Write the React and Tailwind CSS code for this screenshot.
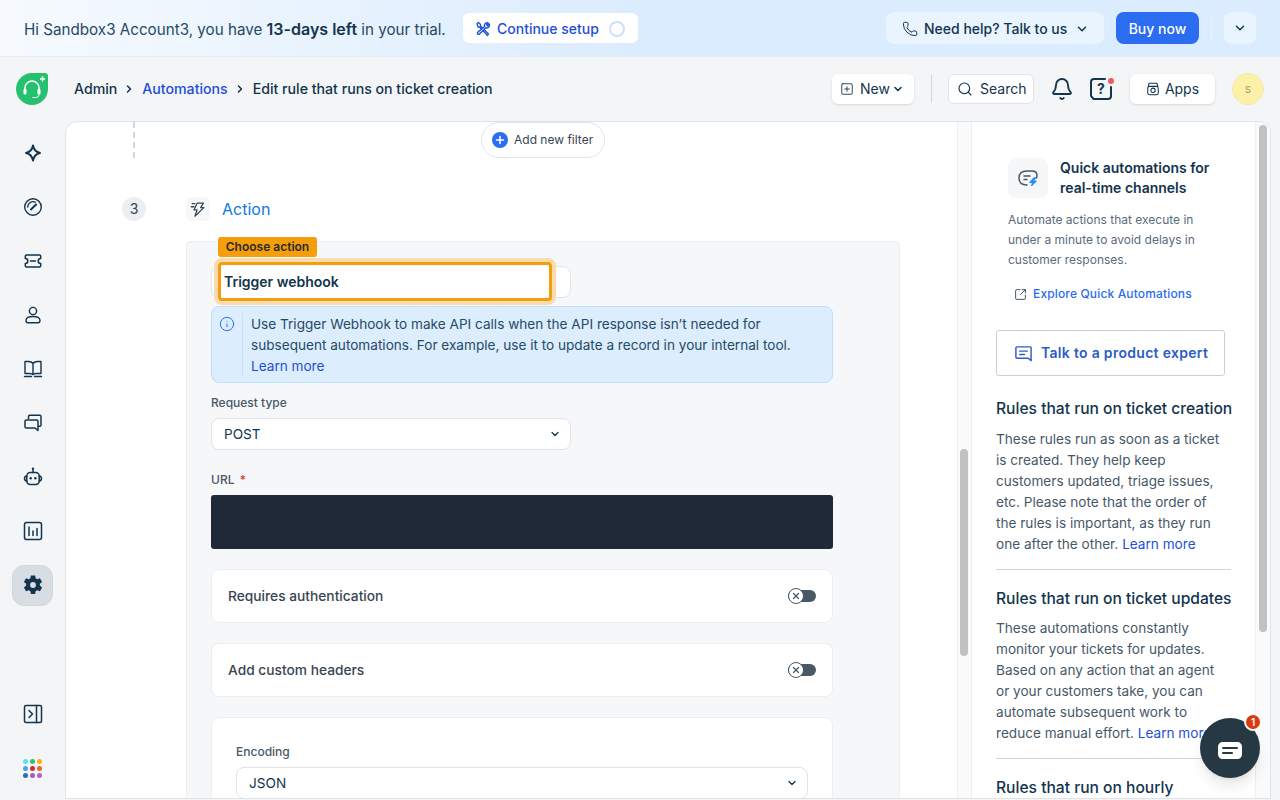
import {
  Bell,
  ChevronDown,
  ChevronRight,
  Info,
  Phone,
  Plus,
  Search,
  SquareArrowOutUpRight,
  SquarePlus,
  X,
} from "lucide-react";

const iconClass = "h-5 w-5 text-[#12344d]";

function Spark() {
  return (
    <svg viewBox="0 0 20 20" className={iconClass} fill="none" stroke="currentColor" strokeWidth="2" strokeLinejoin="round">
      <path d="M10 2.500c.8 4.300 2.900 6.600 7 7.500-4.100.9-6.200 3.200-7 7.500-.8-4.300-2.900-6.600-7-7.500 4.100-.9 6.200-3.200 7-7.500z" />
    </svg>
  );
}

function Gauge() {
  return (
    <svg viewBox="0 0 20 20" className={iconClass} fill="none" stroke="currentColor" strokeWidth="1.400" strokeLinecap="round">
      <circle cx="10" cy="10" r="8.300" />
      <path d="M4.700 10a5.300 5.300 0 0 1 7.600-4.800" />
      <path d="M8 12.500l5-5" strokeWidth="2" />
    </svg>
  );
}

function Ticket() {
  return (
    <svg viewBox="0 0 20 20" className={iconClass} fill="none" stroke="currentColor" strokeWidth="1.500" strokeLinejoin="round">
      <path d="M3.500 4h13c.8 0 1.200.5 1.200 1.200v2.300a2.500 2.500 0 0 0 0 5v2.300c0 .7-.4 1.200-1.200 1.200h-13c-.8 0-1.200-.5-1.200-1.200v-2.300a2.500 2.500 0 0 0 0-5V5.200C2.300 4.500 2.700 4 3.500 4z" />
      <path d="M7.500 10h5" strokeLinecap="round" />
    </svg>
  );
}

function Person() {
  return (
    <svg viewBox="0 0 20 20" className={iconClass} fill="none" stroke="currentColor" strokeWidth="1.400">
      <circle cx="10" cy="6" r="3.600" />
      <path d="M3 15.500c0-2.500 3-4 7-4s7 1.500 7 4c0 1.500-.8 2.200-2 2.200H5c-1.200 0-2-.7-2-2.200z" />
    </svg>
  );
}

function Book() {
  return (
    <svg viewBox="0 0 20 20" className={iconClass} fill="none" stroke="currentColor" strokeWidth="1.400" strokeLinejoin="round">
      <path d="M10 4.500C9 3 7.500 2.500 5.500 2.500H2v12h4.500c1.800 0 3 .4 3.500 1.200.5-.8 1.700-1.200 3.500-1.200H18v-12h-3.500C12.500 2.500 11 3 10 4.500zM10 4.500v11" />
      <path d="M1.500 17.500h7M11.500 17.500h7" strokeLinecap="round" />
    </svg>
  );
}

function Chats() {
  return (
    <svg viewBox="0 0 20 20" className={iconClass} fill="none" stroke="currentColor" strokeWidth="1.500" strokeLinejoin="round">
      <path d="M5.500 6V3.500c0-.8.5-1.300 1.300-1.300h10c.8 0 1.200.5 1.200 1.300v8.500c0 .8-.4 1.300-1.200 1.300H15" />
      <path d="M3.300 7h10.400c.8 0 1.300.5 1.300 1.300v9.200l-3-2.500H3.300c-.8 0-1.300-.5-1.300-1.300V8.300C2 7.500 2.500 7 3.300 7z" />
    </svg>
  );
}

function Robot() {
  return (
    <svg viewBox="0 0 20 20" className={iconClass} fill="none" stroke="currentColor" strokeWidth="1.500" strokeLinecap="round">
      <circle cx="10" cy="1.800" r="1.200" fill="currentColor" stroke="none" />
      <path d="M10 3v2.500" />
      <rect x="3.800" y="5.500" width="12.400" height="12" rx="3.500" />
      <path d="M3.800 9c-1.500.2-2.300 1-2.300 2.500S2.300 13.800 3.800 14M16.200 9c1.500.2 2.300 1 2.300 2.500s-.8 2.300-2.300 2.500" />
      <circle cx="7.700" cy="11.300" r="1.200" fill="currentColor" stroke="none" />
      <circle cx="12.300" cy="11.300" r="1.200" fill="currentColor" stroke="none" />
    </svg>
  );
}

function Chart() {
  return (
    <svg viewBox="0 0 20 20" className={iconClass} fill="none" stroke="currentColor" strokeWidth="1.500" strokeLinecap="round">
      <rect x="1.500" y="1.500" width="17" height="17" rx="2" />
      <path d="M6 6v8.500M10 10v4.500M14 7.500v7" />
    </svg>
  );
}

function Gear() {
  return (
    <svg viewBox="0 0 24 24" className="h-[22px] w-[22px] text-[#12344d]" fill="currentColor">
      <path
        fillRule="evenodd"
        d="M9.700 1.500h4.600l.6 3.100 1.700 1 3-1 2.300 4-2.400 2.100v1.900l2.400 2.100-2.300 4-3-1-1.700 1-.6 3.100H9.700l-.6-3.100-1.700-1-3 1-2.300-4 2.400-2.100v-1.900L2.100 8.600l2.300-4 3 1 1.700-1zM12 8.800a3.200 3.200 0 1 0 0 6.400 3.200 3.200 0 0 0 0-6.400z"
      />
    </svg>
  );
}

function PanelToggle() {
  return (
    <svg viewBox="0 0 20 20" className={iconClass} fill="none" stroke="currentColor" strokeWidth="1.500" strokeLinecap="round" strokeLinejoin="round">
      <rect x="1.500" y="1.500" width="17" height="17" rx="1.500" />
      <path d="M13.500 1.500v17M6 6.500l3.500 3.500L6 13.500" />
    </svg>
  );
}

function AppDots() {
  const colors = ["#5ce1f2", "#2bc06f", "#ffb000", "#42a5f0", "#d7263d", "#f4621f", "#2a6fb5", "#9b5fd0", "#b85fd0"];
  return (
    <div className="grid grid-cols-3 gap-[2px]">
      {colors.map((c) => (
        <span key={c} className="h-[5px] w-[5px] rounded-full" style={{ backgroundColor: c }} />
      ))}
    </div>
  );
}

function Logo() {
  return (
    <svg viewBox="0 0 32 32" className="h-8 w-8">
      <path d="M16 0h13c1.700 0 3 1.300 3 3v13c0 8.800-7.200 16-16 16S0 24.800 0 16 7.200 0 16 0z" fill="#25c16f" />
      <path d="M9 19v-4a7 7 0 0 1 14 0v4" fill="none" stroke="#fff" strokeWidth="1.600" />
      <rect x="7.500" y="16" width="3" height="5.500" rx="1.300" fill="#fff" />
      <rect x="21.500" y="16" width="3" height="5.500" rx="1.300" fill="#fff" />
      <path d="M23 21.500c0 2.200-1.500 3-4 3h-2.500" fill="none" stroke="#fff" strokeWidth="1" />
      <path d="M26.500 3.500v5M24 6h5" stroke="#fff" strokeWidth="1.500" />
    </svg>
  );
}

function Tools() {
  return (
    <svg viewBox="0 0 16 16" className="h-4 w-4" fill="none" stroke="#1d4ed8" strokeWidth="1.300" strokeLinejoin="round" strokeLinecap="round">
      <path d="M2 2.500L3.500 1.500l2 2v1.500L13.500 13 12.500 14.500 4.500 6H3z" />
      <path d="M9.500 5.500a2.800 2.800 0 0 1 3.800-3.500l-1.800 1.800 1 1 1.800-1.800a2.800 2.800 0 0 1-3.500 3.800L4.500 13a1.200 1.200 0 0 1-1.800-1.700z" fill="#dbe7ff" />
    </svg>
  );
}

function HelpBubble() {
  return (
    <div className="relative ml-[15px] h-6 w-6">
      <svg viewBox="0 0 24 24" className="h-6 w-6" fill="none" stroke="#12344d" strokeWidth="2" strokeLinecap="round">
        <path d="M16 2H5C3 2 2 3 2 5v14l2.500 3H19c2 0 3-1 3-3v-9" />
      </svg>
      <span className="absolute inset-0 flex items-center justify-center text-sm font-bold text-[#12344d]">?</span>
      <span className="absolute right-[-1px] top-[1px] h-[6px] w-[6px] rounded-full bg-[#f25c5c]" />
    </div>
  );
}

function ActionBolt() {
  return (
    <svg viewBox="0 0 20 20" className="h-[18px] w-[18px]" fill="none" stroke="#384551" strokeWidth="1.400" strokeLinejoin="round" strokeLinecap="round">
      <path d="M9 3.500h7l-3 5h3.500L6.500 18l2.500-7H5.500z" />
      <path d="M3.500 4h3M2.500 7.500h3" />
    </svg>
  );
}

function NavItem({ active, children }) {
  return (
    <div className="flex h-[54px] items-center justify-center">
      <div className={`flex h-[41px] w-[41px] items-center justify-center rounded-xl ${active ? "border border-[#cfd7df] bg-[#d7dde3]" : ""}`}>
        {children}
      </div>
    </div>
  );
}

function ToggleCard({ label }) {
  return (
    <div className="mb-5 flex h-[54px] w-[622px] items-center justify-between rounded-lg border border-[#ebeff3] bg-white pl-4 pr-4">
      <span className="text-[13.75px] font-medium text-[#384551]">{label}</span>
      <div className="relative h-3 w-7 rounded-full bg-[#475867]">
        <div className="absolute left-0 top-[-2px] flex h-4 w-4 items-center justify-center rounded-full border border-[#475867] bg-white">
          <X className="h-2.5 w-2.5 text-[#475867]" strokeWidth={3} />
        </div>
      </div>
    </div>
  );
}

function Select({ children, className }) {
  return (
    <div className={`flex h-8 items-center justify-between rounded-lg border border-[#dfe3ea] bg-white pl-3 pr-[9px] text-[13.6px] text-[#12344d] ${className}`}>
      {children}
      <ChevronDown className="h-3 w-3 text-[#12344d]" strokeWidth={2.500} />
    </div>
  );
}

export default function App() {
  return (
    <div className="relative flex h-[800px] w-[1280px] flex-col overflow-hidden bg-[#f3f5f7] font-['Inter',sans-serif] text-[#12344d]">
      {/* trial banner */}
      <div className="flex h-[57px] shrink-0 items-center justify-between border-b border-[#e3eefa] bg-gradient-to-r from-[#f6fafe] to-[#dbecfe] to-[50%] pl-6 pr-6">
        <div className="flex items-center">
          <span className="w-[422px] whitespace-nowrap pt-[2px] text-[15.2px] text-[#264966]">
            Hi Sandbox3 Account3, you have <b className="text-base font-semibold text-[#12344d]">13-days left</b> in your trial.
          </span>
          <div className="ml-[17px] flex h-[30px] w-[175px] items-center rounded-md bg-white pl-3 pt-[2px]">
            <Tools />
            <span className="ml-[6px] text-sm font-medium text-[#1d4ed8]">Continue setup</span>
            <span className="ml-[10px] h-4 w-4 rounded-full border-2 border-[#cfe0f5]" />
          </div>
        </div>
        <div className="flex items-center">
          <div className="flex h-8 w-[218px] items-center rounded-lg bg-[#e9f4ff] pl-4 pt-[2px] text-sm font-medium text-[#12344d]">
            <Phone className="h-4 w-4" strokeWidth={1.500} />
            <span className="ml-[6px]">Need help? Talk to us</span>
            <ChevronDown className="ml-2 h-3.5 w-3.5" strokeWidth={2.500} />
          </div>
          <div className="ml-3 flex h-8 w-[83px] items-center justify-center rounded-lg bg-[#2b6cf0] pt-[2px] text-sm font-medium text-white">Buy now</div>
          <div className="ml-3 h-7 w-px bg-[#eaf3fd]" />
          <div className="ml-3 flex h-8 w-8 items-center justify-center rounded-lg bg-[#e9f4ff]">
            <ChevronDown className="h-3.5 w-3.5" strokeWidth={2.500} />
          </div>
        </div>
      </div>

      {/* top nav */}
      <div className="flex h-[64px] shrink-0 items-center justify-between pl-4 pr-4">
        <div className="flex items-center">
          <Logo />
          <div className="ml-[26px] flex items-center text-[14.15px] font-medium">
            <span>Admin</span>
            <ChevronRight className="ml-[6px] mr-[7px] h-3 w-3" strokeWidth={3} />
            <span className="text-[#1d4ed8]">Automations</span>
            <ChevronRight className="ml-[6px] mr-[7px] h-3 w-3" strokeWidth={3} />
            <span>Edit rule that runs on ticket creation</span>
          </div>
        </div>
        <div className="flex items-center">
          <div className="flex h-[30px] w-[82px] items-center rounded-md bg-white pl-[8px] text-sm shadow-sm">
            <SquarePlus className="h-[14px] w-[14px]" strokeWidth={1.500} />
            <span className="ml-[6px]">New</span>
            <ChevronDown className="ml-[2px] h-3 w-3" strokeWidth={3} />
          </div>
          <div className="ml-[17px] h-7 w-px bg-[#cfd7df]" />
          <div className="ml-4 flex h-[30px] w-[86px] items-center rounded-md border border-[#dfe3ea] bg-white pl-2 text-sm">
            <Search className="h-4 w-4" strokeWidth={1.700} />
            <span className="ml-[7px]">Search</span>
          </div>
          <Bell className="ml-4 h-6 w-6" strokeWidth={1.800} />
          <HelpBubble />
          <div className="ml-[17px] flex h-[30px] w-[85px] items-center justify-center rounded-md bg-white text-sm shadow-sm">
            <svg viewBox="0 0 16 16" className="h-[14px] w-[14px]" fill="none" stroke="currentColor" strokeWidth="1.200">
              <rect x="2" y="5" width="12" height="9.500" rx="2" />
              <path d="M2.500 5l1-3.500h9l1 3.500" />
              <circle cx="8" cy="9.500" r="2.500" />
            </svg>
            <span className="ml-[5px]">Apps</span>
          </div>
          <div className="ml-[17px] flex h-8 w-8 items-center justify-center rounded-full border border-[#f6e9a8] bg-[#fdf0a8] text-xs text-[#a89f6a]">s</div>
        </div>
      </div>

      <div className="flex min-h-0 flex-1 pb-[1px] pr-[9px]">
        {/* sidebar */}
        <div className="flex w-[65px] shrink-0 flex-col pb-[4px] pt-[5px]">
          <NavItem><Spark /></NavItem>
          <NavItem><Gauge /></NavItem>
          <NavItem><Ticket /></NavItem>
          <NavItem><Person /></NavItem>
          <NavItem><Book /></NavItem>
          <NavItem><Chats /></NavItem>
          <NavItem><Robot /></NavItem>
          <NavItem><Chart /></NavItem>
          <NavItem active><Gear /></NavItem>
          <div className="mt-auto">
            <NavItem><PanelToggle /></NavItem>
            <NavItem><AppDots /></NavItem>
          </div>
        </div>

        {/* content */}
        <div className="flex min-w-0 flex-1 overflow-hidden rounded-t-xl border border-[#dfe4e9] bg-white">
          <div className="relative w-[891px] shrink-0 overflow-hidden">
            <div className="flex h-[36px]">
              <div className="ml-[67px] h-[36px] border-l-2 border-dashed border-[#cfd7df]" />
              <div className="ml-[346px] flex h-[36px] w-[124px] items-center rounded-full border border-[#dfe3ea] bg-white pl-[10px]">
                <span className="flex h-4 w-4 items-center justify-center rounded-full bg-[#2b6cf0]">
                  <Plus className="h-3 w-3 text-white" strokeWidth={3} />
                </span>
                <span className="ml-[6px] text-xs text-[#384551]">Add new filter</span>
              </div>
            </div>

            <div className="mt-[39px] flex items-center">
              <span className="ml-14 flex h-6 w-6 items-center justify-center rounded-full bg-[#ebeff3] text-sm text-[#384551]">3</span>
              <span className="ml-10 flex h-6 w-6 items-center justify-center rounded-md bg-[#f5f7f9]">
                <ActionBolt />
              </span>
              <span className="ml-3 text-base text-[#0a7ae0]">Action</span>
            </div>

            <div className="relative ml-[120px] mt-[20px] h-[600px] w-[714px] rounded-sm border border-[#ebeff3] bg-[#f5f7f9] pl-6 pt-6">
              <div className="absolute left-[31px] top-[-5px] z-10 flex h-5 w-[99px] items-center justify-center rounded-[3px] bg-[#f59e0b] text-xs font-semibold text-[#2a2a2a]">
                Choose action
              </div>
              <div className="absolute left-[31px] top-[20px] z-10 flex h-[39px] w-[334px] items-center rounded-[4px] border-[3px] border-[#f59e0b] bg-white pl-[3px] text-sm font-semibold text-[#12344d] ring-4 ring-[#f8dcb0]">
                Trigger webhook
              </div>
              <Select className="w-[360px]"> </Select>

              <div className="mt-2 flex h-[77px] w-[622px] rounded-lg border border-[#bfdfff] bg-[#dcedfe] pb-[6px] pt-[6px] text-[13.6px] leading-[21px] text-[#264966]">
                <div className="flex w-[30px] justify-center pt-[3px]">
                  <Info className="h-4 w-4 text-[#2b6cf0]" strokeWidth={1.500} />
                </div>
                <div className="h-[63px] border-l border-[#c9e1f8] pl-[8px] pt-px">
                  <p className="whitespace-nowrap">Use Trigger Webhook to make API calls when the API response isn’t needed for</p>
                  <p className="whitespace-nowrap">subsequent automations. For example, use it to update a record in your internal tool.</p>
                  <p className="text-[#1d4ed8]">Learn more</p>
                </div>
              </div>

              <div className="mt-3 text-xs font-medium leading-4 text-[#475867]">Request type</div>
              <Select className="mt-[7px] w-[360px]">POST</Select>

              <div className="mt-[22px] text-xs font-medium leading-4 text-[#475867]">
                URL <span className="ml-[2px] text-[#e43538]">*</span>
              </div>
              <div className="mb-5 mt-[7px] h-[54px] w-[622px] rounded-[3px] bg-[#1f2937]" />

              <ToggleCard label="Requires authentication" />
              <ToggleCard label="Add custom headers" />

              <div className="w-[622px] rounded-lg border border-[#ebeff3] bg-white pb-10 pl-6 pt-[26px]">
                <div className="text-xs font-medium leading-4 text-[#475867]">Encoding</div>
                <Select className="mt-[7px] w-[572px]">JSON</Select>
              </div>
            </div>
          </div>

          {/* main scrollbar */}
          <div className="flex w-[14px] shrink-0 flex-col border-l border-[#ebeff3] bg-[#fafafa] pl-[2px] pr-[2px] pt-[327px]">
            <div className="h-[207px] w-[8px] rounded-full bg-[#c1c1c1]" />
          </div>

          {/* help panel */}
          <div className="relative flex w-[285px] shrink-0 flex-col overflow-hidden border-l border-r border-[#ebeff3] pl-6 pr-6 pt-9">
            <div className="ml-3 flex shrink-0">
              <span className="flex h-10 w-10 shrink-0 items-center justify-center rounded-lg bg-[#f5f7f9]">
                <svg viewBox="0 0 24 24" className="h-6 w-6" fill="none" stroke="#475867" strokeWidth="1.500" strokeLinecap="round">
                  <path d="M11 19c-4 0-8-1.500-8-7 0-5 3-7 8-7h5c3 0 5 1.500 5 4.500 0 1-.2 1.700-.5 2.500" />
                  <path d="M8 10h6M8 13.500h3" />
                  <path d="M17.500 12l-4 4.500h3l-1 3.500 5-5h-3l2-3z" fill="#2b8cf0" stroke="#2b8cf0" strokeWidth="1" />
                </svg>
              </span>
              <p className="ml-3 whitespace-nowrap text-sm font-semibold leading-5">
                Quick automations for
                <br />
                real-time channels
              </p>
            </div>
            <p className="ml-3 mt-3 shrink-0 whitespace-nowrap text-xs leading-5 text-[#5b6b7c]">
              Automate actions that execute in
              <br />
              under a minute to avoid delays in
              <br />
              customer responses.
            </p>
            <div className="ml-[18px] mt-[14px] flex shrink-0 items-center">
              <SquareArrowOutUpRight className="h-[13px] w-[13px] text-[#384551]" strokeWidth={1.700} />
              <span className="ml-[6px] text-xs font-medium leading-5 tracking-[0.15px] text-[#2b6cf0]">Explore Quick Automations</span>
            </div>
            <div className="mt-[26px] flex h-[46px] w-[229px] shrink-0 items-center rounded-[3px] border border-[#c5d0de] pl-[17px]">
              <svg viewBox="0 0 20 20" className="h-[19px] w-[19px]" fill="none" stroke="#2c5cc5" strokeWidth="1.500" strokeLinejoin="round" strokeLinecap="round">
                <path d="M3 3h14c.6 0 1 .4 1 1v13.500l-3-2.500H3c-.6 0-1-.4-1-1V4c0-.6.4-1 1-1z" />
                <path d="M6 7.500h8M6 11h5" />
              </svg>
              <span className="ml-2 text-sm font-semibold tracking-[0.3px] text-[#2c5cc5]">Talk to a product expert</span>
            </div>

            <h3 className="mt-[22px] shrink-0 whitespace-nowrap text-[15.6px] font-medium leading-[22px]">Rules that run on ticket creation</h3>
            <p className="mt-[9px] w-[230px] shrink-0 text-[13.6px] leading-[21px] text-[#475867]">
              These rules run as soon as a ticket is created. They help keep customers updated, triage issues, etc. Please note that the order of the rules is important, as they run one after the other.{" "}
              <span className="text-[#1d4ed8]">Learn more</span>
            </p>
            <div className="mt-[14px] h-px shrink-0 bg-[#cfd7df]" />
            <h3 className="mt-[18px] shrink-0 whitespace-nowrap text-[15.6px] font-medium leading-[22px]">Rules that run on ticket updates</h3>
            <p className="mt-[8px] w-[230px] shrink-0 text-[13.6px] leading-[21px] text-[#475867]">
              These automations constantly monitor your tickets for updates. Based on any action that an agent or your customers take, you can automate subsequent work to reduce manual effort.{" "}
              <span className="text-[#1d4ed8]">Learn more</span>
            </p>
            <div className="mt-[14px] h-px shrink-0 bg-[#cfd7df]" />
            <h3 className="mt-[19px] shrink-0 text-[15.6px] font-medium leading-5">Rules that run on hourly triggers</h3>
          </div>

          {/* help panel scrollbar */}
          <div className="w-[14px] shrink-0 bg-[#fafafa] pl-[3px] pt-[3px]">
            <div className="h-[507px] w-[8px] rounded-full bg-[#c1c1c1]" />
          </div>
        </div>
      </div>

      {/* chat launcher */}
      <div className="absolute left-[1200px] top-[718px] flex h-[60px] w-[60px] items-center justify-center rounded-full bg-[#263843] pt-1 shadow-lg">
        <svg viewBox="0 0 24 17" className="h-[17px] w-6">
          <path d="M5 0h14c3 0 5 2 5 5v7c0 3-2 5-5 5H5c-3 0-5-2-5-5V5c0-3 2-5 5-5z" fill="#fff" />
          <path d="M5 6h14M5 11h9" stroke="#263843" strokeWidth="2" strokeLinecap="round" />
        </svg>
        <span className="absolute right-[-2px] top-[-5px] flex h-[18px] w-[18px] items-center justify-center rounded-full border-2 border-white bg-[#dc3a0e] text-[10px] font-semibold text-white">1</span>
      </div>
    </div>
  );
}
